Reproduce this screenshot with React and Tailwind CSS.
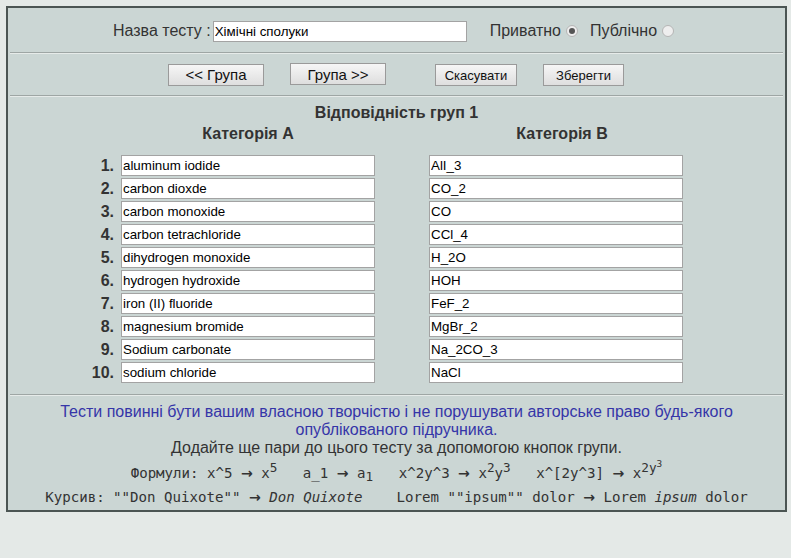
import React from 'react';

const pairs = [
  ['aluminum iodide', 'AlI_3'],
  ['carbon dioxde', 'CO_2'],
  ['carbon monoxide', 'CO'],
  ['carbon tetrachloride', 'CCl_4'],
  ['dihydrogen monoxide', 'H_2O'],
  ['hydrogen hydroxide', 'HOH'],
  ['iron (II) fluoride', 'FeF_2'],
  ['magnesium bromide', 'MgBr_2'],
  ['Sodium carbonate', 'Na_2CO_3'],
  ['sodium chloride', 'NaCl'],
];

function Rule() {
  return <div className="mx-[2px] border-t border-t-[#9ea6a4] border-b border-b-[#e6ebe9]" />;
}

function Radio({ checked }) {
  return (
    <span className="flex items-center justify-center w-[12px] h-[12px] rounded-full bg-[#eeeeee] border border-[#b5b5b5]">
      {checked && <span className="w-[6px] h-[6px] rounded-full bg-[#555]" />}
    </span>
  );
}

function Btn({ children, w, small }) {
  return (
    <button
      className={`${w} h-[22px] border border-[#9a9a9a] bg-gradient-to-b from-[#f6f6f6] to-[#dedede] text-[#111] ${small ? 'text-[13px]' : 'text-[15px]'} leading-none`}
    >
      {children}
    </button>
  );
}

function Field({ value }) {
  return (
    <input
      readOnly
      value={value}
      className="block w-[254px] h-[21px] border border-[#a3a3a3] bg-white px-[1px] text-[13.33px] text-black outline-none"
    />
  );
}

function Arrow() {
  return <span className="font-bold" style={{ fontFamily: '"DejaVu Sans", sans-serif' }}>→</span>;
}

function Sup({ children }) {
  return <sup className="text-[0.9em]">{children}</sup>;
}

export default function App() {
  return (
    <div className="min-h-screen bg-[#e4e9e7] pt-[6px] pl-[6px]" style={{ fontFamily: '"Liberation Sans", Arial, sans-serif' }}>
      <div className="w-[781px] border-2 border-[#4b5553] bg-[#cbd6d4] text-[#333]">
        {/* title row */}
        <div className="h-[44px] pt-[2px] pl-[105px] flex items-center text-[16px]">
          <span>Назва тесту :</span>
          <input
            readOnly
            value="Хімічні сполуки"
            className="ml-[2px] w-[254px] h-[21px] border border-[#a3a3a3] bg-white px-[1px] text-[13.33px] text-black outline-none"
          />
          <span className="ml-[23px]">Приватно</span>
          <span className="ml-[5px]"><Radio checked /></span>
          <span className="ml-[12px]">Публічно</span>
          <span className="ml-[5px]"><Radio /></span>
        </div>
        <Rule />

        {/* buttons */}
        <div className="h-[41px] flex items-center pl-[160px]">
          <Btn w="w-[96px]">&lt;&lt; Група</Btn>
          <span className="ml-[26px]"><Btn w="w-[96px]">Група &gt;&gt;</Btn></span>
          <span className="ml-[49px]"><Btn w="w-[82px]" small>Скасувати</Btn></span>
          <span className="ml-[26px]"><Btn w="w-[81px]" small>Зберегти</Btn></span>
        </div>
        <Rule />

        {/* table */}
        <div className="pt-[7px] pb-[11px]">
          <div className="text-center font-bold text-[16px] leading-[18px]">Відповідність груп 1</div>
          <div className="flex pl-[113px] text-[16px] font-bold leading-[20px] mt-[2px] mb-[11px]">
            <div className="w-[254px] text-center">Категорія А</div>
            <div className="ml-[60px] w-[254px] text-center">Категорія В</div>
          </div>
          <div className="flex flex-col gap-[2px] pl-[76px]">
            {pairs.map(([a, b], i) => (
              <div key={i} className="flex items-center h-[21px]">
                <div className="w-[30px] text-right font-bold text-[16px] leading-[21px]">{i + 1}.</div>
                <div className="ml-[7px]"><Field value={a} /></div>
                <div className="ml-[54px]"><Field value={b} /></div>
              </div>
            ))}
          </div>
        </div>
        <Rule />

        {/* notes */}
        <div className="pt-[7px] pb-[1px] text-center text-[16px] leading-[18px]">
          <div className="text-[#3535a8]">
            Тести повинні бути вашим власною творчістю і не порушувати авторське право будь-якого
            <br />
            опублікованого підручника.
          </div>
          <div className="text-[#333]">Додайте ще пари до цього тесту за допомогою кнопок групи.</div>
          <div
            className="mt-[4px] text-[14.1px] leading-[24px] whitespace-pre text-[#333]"
            style={{ fontFamily: '"DejaVu Sans Mono", monospace' }}
          >
            <div>
              Формули: x^5 <Arrow /> x<Sup>5</Sup>   a_1 <Arrow /> a<sub className="text-[0.9em]">1</sub>   x^2y^3 <Arrow /> x<Sup>2</Sup>y<Sup>3</Sup>   x^[2y^3] <Arrow /> x<Sup>2y<sup>3</sup></Sup>
            </div>
            <div>
              Курсив: ""Don Quixote"" <Arrow /> <i>Don Quixote</i>    Lorem ""ipsum"" dolor <Arrow /> Lorem <i>ipsum</i> dolor
            </div>
          </div>
        </div>
      </div>
    </div>
  );
}
